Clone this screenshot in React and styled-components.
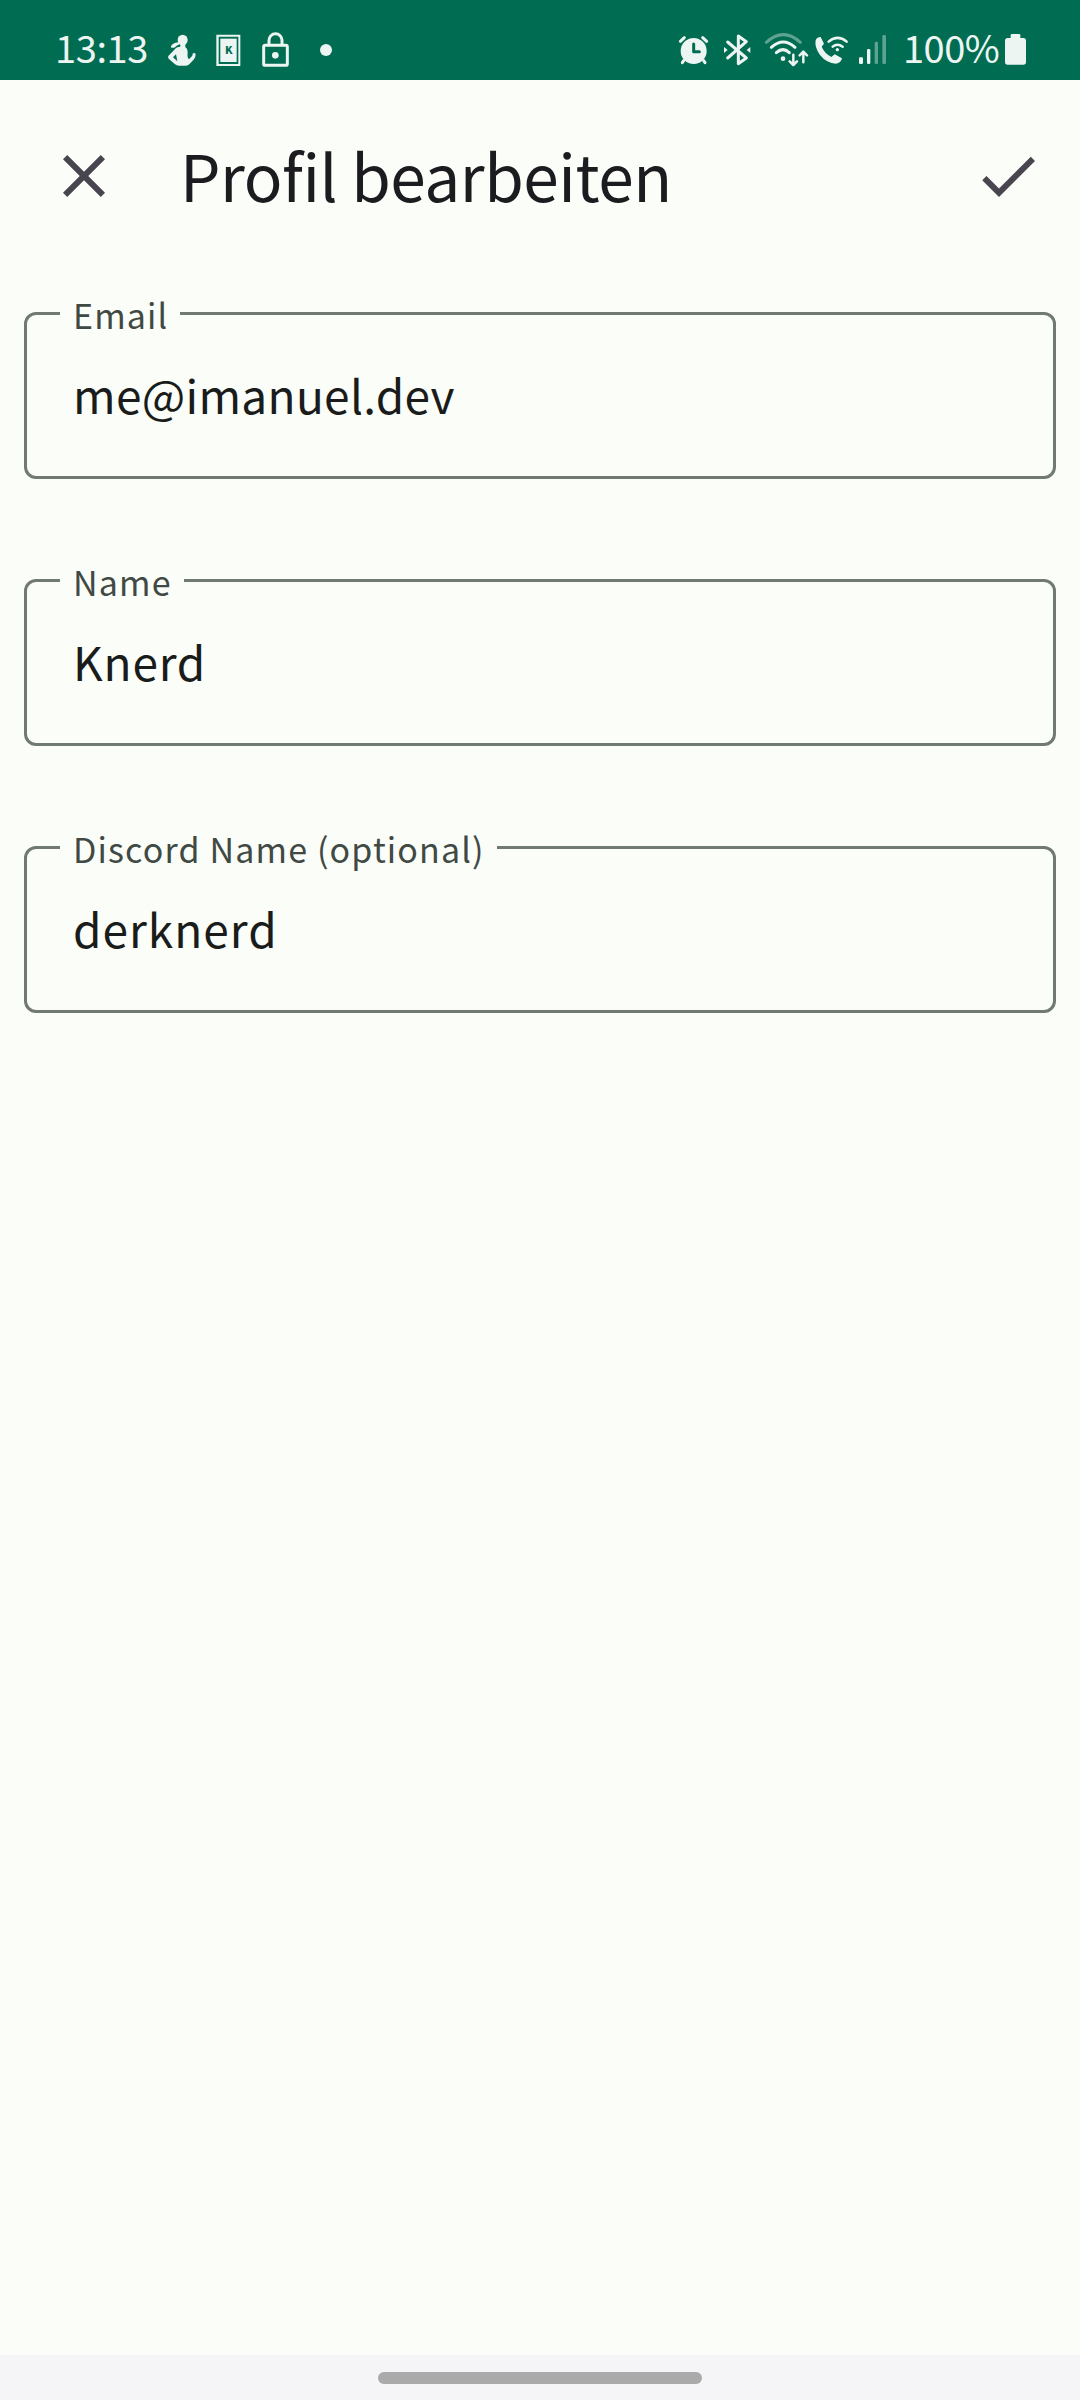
import React from "react";
import styled, { createGlobalStyle } from "styled-components";

const GlobalStyle = createGlobalStyle`
  *, *::before, *::after { box-sizing: border-box; }
  body {
    margin: 0;
    background: #fbfdf8;
    font-family: "Noto Sans CJK SC", "Noto Sans", sans-serif;
    font-weight: 400;
  }
`;

const Screen = styled.div`
  display: flex;
  flex-direction: column;
  width: 1080px;
  height: 2400px;
  background: #fbfdf8;
`;

const StatusBar = styled.header`
  display: flex;
  justify-content: space-between;
  height: 80px;
  padding: 30px 53px 0 55px;
  background: #006c51;
  color: #ecf5f2;
`;

const StatusGroup = styled.div`
  display: flex;
  align-items: flex-start;
`;

const StatusText = styled.span`
  width: ${(p) => p.$width}px;
  margin-left: ${(p) => p.$gap || 0}px;
  font-size: 38px;
  line-height: 34px;
  letter-spacing: ${(p) => p.$spacing}px;
  white-space: nowrap;
`;

const Glyph = styled.svg`
  display: block;
  flex: none;
  height: 40px;
  margin-left: ${(p) => p.$gap || 0}px;
  fill: #ecf5f2;
  overflow: visible;

  .line {
    fill: none;
    stroke: #ecf5f2;
    stroke-width: 9;
    stroke-linecap: round;
    stroke-linejoin: round;
  }
  .thin { stroke-width: 7.5; }
  .cut { fill: #006c51; }
  .hands { stroke: #006c51; }
  .faded { opacity: 0.4; }
`;

const AppBar = styled.div`
  display: flex;
  align-items: center;
  height: 192px;
  padding: 0 36px 0 48px;
`;

const IconButton = styled.button`
  display: flex;
  padding: 0;
  border: 0;
  background: none;
  color: #49454f;

  svg { width: 72px; height: 72px; fill: currentColor; }
`;

const Title = styled.h1`
  flex: 1;
  margin: 0 0 5px 60px;
  color: #1c1b1f;
  font-size: 64px;
  font-weight: 400;
  line-height: 72px;
  letter-spacing: -0.45px;
`;

const Form = styled.form`
  display: flex;
  flex: 1;
  flex-direction: column;
  gap: 100px;
  padding: 40px 24px 0;
`;

const Field = styled.fieldset`
  height: 167px;
  min-width: 0;
  margin: 0;
  padding: 51px 33px 0 46px;
  border: 3px solid #707974;
  border-radius: 12px;
`;

const Label = styled.legend`
  height: 3px;
  margin-left: -13px;
  padding: 0 12px 0 13px;
  color: #404944;
  font-size: 34px;
  line-height: 5px;
  letter-spacing: 1.15px;
  white-space: nowrap;
`;

const Value = styled.input`
  display: block;
  width: 100%;
  height: 56px;
  padding: 0;
  border: 0;
  outline: 0;
  background: none;
  color: #191c1a;
  font: inherit;
  font-size: 46px;
  line-height: 56px;
  letter-spacing: ${(p) => p.$tracking}px;
`;

const NavBar = styled.footer`
  display: flex;
  justify-content: center;
  height: 45px;
  padding-top: 17px;
  background: #f5f5f8;
`;

const NavHandle = styled.div`
  width: 324px;
  height: 12px;
  border-radius: 6px;
  background: #aaaaaa;
`;

function StatusIcon({ x, w, gap, children }) {
  return (
    <Glyph $gap={gap} width={w / 3} viewBox={`${x} 30 ${w} 120`}>
      {children}
    </Glyph>
  );
}

const fields = [
  { label: "Email", value: "me@imanuel.dev", tracking: 0.3 },
  { label: "Name", value: "Knerd", tracking: 0.8 },
  { label: "Discord Name (optional)", value: "derknerd", tracking: 1 },
];

export default function App() {
  return (
    <>
      <GlobalStyle />
      <Screen>
        <StatusBar>
          <StatusGroup>
            <StatusText $width={111} $spacing={-0.4}>13:13</StatusText>
            <StatusIcon x={48} w={96}>
              <ellipse cx="98" cy="60" rx="15" ry="16" />
              <path d="M62 82Q65 69 86 67L89 73Q80 76 75 82Q69 85 62 82Z" />
              <path
                fillRule="evenodd"
                d="M91 70V80Q79 80 73 89L55 108Q53 112 56 116L74 132Q80 137 87 137H108Q114 137 118 133L132 118Q137 112 137 102Q136 99 131 99Q127 100 127 107L117 118Q111 112 113 98Q113 86 106 82V70ZM78 103L82 124L69 112Z"
              />
            </StatusIcon>
            <StatusIcon x={195} w={81} gap={17}>
              <path
                fillRule="evenodd"
                d="M199 44H271V138H199ZM206 50V132H265V50Z"
              />
              <rect x="211" y="56" width="49" height="70" />
              <text
                className="cut"
                x="225"
                y="102"
                fontSize="32"
                fontWeight="900"
                fontFamily="Noto Sans CJK SC, sans-serif"
              >
                K
              </text>
            </StatusIcon>
            <StatusIcon x={330} w={90} gap={18}>
              <rect className="line" x="341" y="76" width="71" height="60" rx="5" />
              <path className="line" d="M357 74V61a19.500 19.500 0 0 1 39 0V74" />
              <circle cx="376" cy="106" r="10" />
            </StatusIcon>
            <StatusIcon x={507} w={42} gap={29}>
              <circle cx="528" cy="90" r="18" />
            </StatusIcon>
          </StatusGroup>
          <StatusGroup>
            <StatusIcon x={51} w={99}>
              <circle cx="101" cy="93" r="39" />
              <path className="line" d="M61 64L73 53M128 53L140 64M71 122L67 128M131 122L135 128" />
              <path className="line hands" d="M101 72V95H118" />
            </StatusIcon>
            <StatusIcon x={189} w={84} gap={13}>
              <path className="line" d="M203 66L259 114L235 131V48L259 65L203 114" />
              <path d="M192 81L203 90L192 99ZM271 81L260 90L271 99Z" />
            </StatusIcon>
            <StatusIcon x={312} w={135} gap={13}>
              <path className="line faded" d="M319 67Q370 21 421 67" />
              <path className="line" d="M334 82Q370 50 405 82M349 98Q369 80 388 98" />
              <circle cx="369" cy="116" r="7" />
              <path
                className="line thin"
                d="M400 104V134M389 124L400 135L411 124M430 127V97M419 106L430 95L441 106"
              />
            </StatusIcon>
            <StatusIcon x={462} w={105} gap={5}>
              <path d="M467 60Q471 51 482 51L492 71L485 80Q493 99 514 111L524 103L546 115Q543 130 528 131Q500 130 480 105Q463 82 467 60Z" />
              <path className="line thin" d="M506 65Q533 42 560 65M518 80Q532 68 548 80" />
              <circle cx="532" cy="89" r="5" />
            </StatusIcon>
            <StatusIcon x={54} w={87} gap={9}>
              <rect x="57" y="112" width="12" height="20" rx="4" />
              <rect x="81" y="87" width="10" height="45" rx="4" />
              <rect className="faded" x="104" y="65" width="10" height="67" rx="4" />
              <rect className="faded" x="127" y="45" width="11" height="87" rx="4" />
            </StatusIcon>
            <StatusText $width={101} $gap={16} $spacing={-0.5}>100%</StatusText>
            <StatusIcon x={492} w={69}>
              <rect x="495" y="54" width="63" height="80" rx="8" />
              <rect x="512" y="42" width="29" height="20" rx="4" />
            </StatusIcon>
          </StatusGroup>
        </StatusBar>
        <AppBar>
          <IconButton aria-label="Schließen">
            <svg viewBox="0 0 24 24">
              <path d="M19 6.410 17.590 5 12 10.590 6.410 5 5 6.410 10.590 12 5 17.590 6.410 19 12 13.410 17.590 19 19 17.590 13.410 12z" />
            </svg>
          </IconButton>
          <Title>Profil bearbeiten</Title>
          <IconButton aria-label="Speichern">
            <svg viewBox="0 0 24 24">
              <path d="M9 16.170 4.830 12l-1.420 1.410L9 19 21 7l-1.410-1.410z" />
            </svg>
          </IconButton>
        </AppBar>
        <Form>
          {fields.map((f) => (
            <Field key={f.label}>
              <Label>{f.label}</Label>
              <Value aria-label={f.label} defaultValue={f.value} $tracking={f.tracking} />
            </Field>
          ))}
        </Form>
        <NavBar>
          <NavHandle />
        </NavBar>
      </Screen>
    </>
  );
}
